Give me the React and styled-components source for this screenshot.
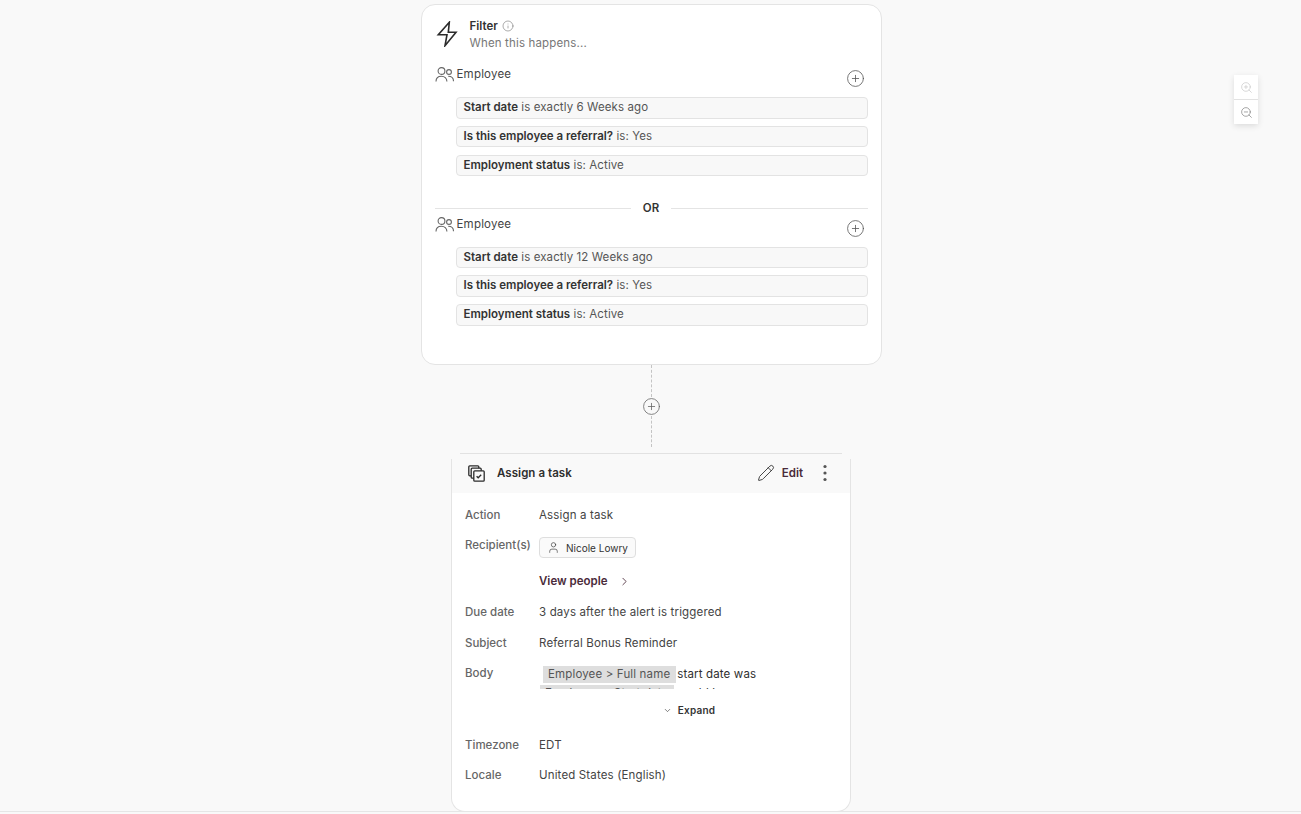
import React from 'react';
import styled, { createGlobalStyle } from 'styled-components';
import { Info, CirclePlus, Pencil, User, ChevronRight, ChevronDown, ZoomIn, ZoomOut } from 'lucide-react';

const GlobalStyle = createGlobalStyle`
  html, body {
    margin: 0;
    padding: 0;
    background: #f9f9f9;
    font-family: Inter, "Noto Sans", sans-serif;
    font-size: 12px;
    color: #2f2f2f;
  }
`;

const Page = styled.div`
  position: relative;
  height: 814px;
  overflow: hidden;
  background: #f9f9f9;
  box-sizing: border-box;
  padding-top: 4px;
  display: flex;
  flex-direction: column;
  align-items: center;
`;

const BottomRule = styled.div`
  position: absolute;
  left: 0;
  right: 0;
  top: 811px;
  height: 1px;
  background: #e6e6e6;
`;

const Column = styled.div`
  width: 461px;
  margin-left: 1px;
  display: flex;
  flex-direction: column;
  align-items: center;
`;

const FilterCard = styled.section`
  width: 461px;
  height: 361px;
  box-sizing: border-box;
  background: #fff;
  border: 1px solid #e4e4e4;
  border-radius: 14px;
  padding: 13px 13px 0 13px;
`;

const FilterHead = styled.header`
  display: flex;
  align-items: flex-start;
  height: 49px;
`;

const BoltBox = styled.div`
  width: 34px;
  margin-left: 1px;
  padding-top: 3px;
  color: #2b2b2b;
`;

const TitleLine = styled.div`
  display: flex;
  align-items: center;
  gap: 4px;
  height: 15px;
  font-weight: 600;
  font-size: 11.5px;
  color: #333;
  svg { color: #666; }
`;

const Subtitle = styled.div`
  margin-top: 2px;
  font-size: 11.5px;
  color: #777;
  letter-spacing: 0.15px;
  line-height: 16px;
`;

const GroupHead = styled.div`
  display: flex;
  align-items: flex-start;
  height: 30px;
  color: #444;
  letter-spacing: 0.2px;
  font-size: 11.5px;
`;

const GroupIcon = styled.div`
  width: 22px;
  height: 18px;
  margin-top: -1px;
  color: #666;
`;

const GroupName = styled.span`
  line-height: 14px;
`;

const PlusBox = styled.div`
  margin-left: auto;
  margin-right: 3px;
  margin-top: 2px;
  color: #555;
  height: 19px;
`;

const Conditions = styled.div`
  margin-left: 21px;
  display: flex;
  flex-direction: column;
  gap: 7.2px;
`;

const Condition = styled.div`
  height: 21.6px;
  box-sizing: border-box;
  border: 1px solid #e3e3e3;
  border-radius: 4px;
  background: #f8f8f8;
  padding: 0 7px;
  line-height: 18.5px;
  font-size: 11.5px;
  letter-spacing: 0.1px;
  color: #555;
  b {
    font-weight: 600;
    letter-spacing: 0;
    color: #333;
  }
`;

const OrDivider = styled.div`
  display: flex;
  align-items: center;
  gap: 12px;
  height: 14px;
  margin: 25px 0 1.5px 0;
  font-weight: 600;
  font-size: 11.5px;
  color: #333;
  &::before, &::after {
    content: '';
    flex: 1;
    height: 1px;
    background: #e4e4e4;
  }
`;

const Connector = styled.div`
  display: flex;
  flex-direction: column;
  align-items: center;
  height: 88px;
  color: #666;
`;

const Dash = styled.div`
  width: 0;
  height: ${p => p.$h}px;
  border-left: 1px dashed #c4c4c4;
`;

const ConnectorPlus = styled.div`
  height: 19px;
  margin-left: 1px;
`;

const TaskTopLine = styled.div`
  width: 382px;
  height: 1px;
  background: #e2e2e2;
`;

const TaskCard = styled.section`
  width: 400px;
  height: 353px;
  margin-top: 5px;
  box-sizing: border-box;
  background: #fff;
  border: 1px solid #e4e4e4;
  border-top: none;
  border-radius: 0 0 14px 14px;
`;

const TaskHead = styled.header`
  height: 34px;
  box-sizing: border-box;
  background: #f9f9f9;
  display: flex;
  align-items: center;
  padding: 0 16px 6px 16px;
`;

const TaskTitle = styled.h3`
  margin: 0 0 0 12px;
  font-size: 11.5px;
  font-weight: 600;
  color: #2f2f2f;
  letter-spacing: 0.05px;
`;

const EditButton = styled.button`
  margin-left: auto;
  display: flex;
  align-items: center;
  gap: 7px;
  background: none;
  border: none;
  padding: 0;
  font: inherit;
  font-size: 11.5px;
  font-weight: 600;
  color: #4a2b3a;
`;

const More = styled.svg`
  margin-left: 20px;
  margin-right: 7px;
  fill: #555;
`;

const TaskBody = styled.div`
  padding: 14px 13px 0 13px;
`;

const Field = styled.div`
  display: grid;
  grid-template-columns: 74px 1fr;
  height: ${p => p.$h}px;
  line-height: 16px;
  font-size: 11.5px;
  letter-spacing: 0.15px;
`;

const Label = styled.div`
  font-weight: 500;
  letter-spacing: 0;
  color: #666;
`;

const Value = styled.div`
  color: #444;
`;

const Chip = styled.div`
  display: inline-flex;
  align-items: center;
  gap: 6px;
  height: 21px;
  box-sizing: border-box;
  padding: 0 7px;
  border: 1px solid #dedede;
  border-radius: 4px;
  background: #fafafa;
  font-size: 10px;
  letter-spacing: 0;
  color: #333;
`;

const ViewPeople = styled.div`
  display: flex;
  align-items: center;
  gap: 10px;
  height: 16px;
  font-weight: 600;
  letter-spacing: 0;
  color: #4a2b3a;
`;

const BodyClip = styled.div`
  height: 24px;
  overflow: hidden;
  margin-left: 1px;
  padding-top: 1px;
  box-sizing: border-box;
  line-height: 17px;
`;

const BodyLine = styled.div`
  display: flex;
  height: 19px;
`;

const Token = styled.span`
  display: inline-block;
  background: #dedede;
  padding: 0 6px 0 5px;
  margin: 0 1px 0 ${p => p.$indent}px;
  height: 17px;
  color: #555;
`;

const ExpandRow = styled.div`
  display: flex;
  justify-content: center;
  align-items: center;
  gap: 6px;
  margin: 12px 0 18px 76px;
  height: 18px;
  font-size: 10px;
  font-weight: 600;
  letter-spacing: 0.2px;
  color: #333;
`;

const ZoomControls = styled.div`
  position: absolute;
  top: 75px;
  left: 1234px;
  width: 24px;
  background: #fff;
  box-shadow: 0 2px 6px rgba(0, 0, 0, 0.12);
`;

const ZoomButton = styled.div`
  height: 24px;
  display: flex;
  align-items: center;
  justify-content: center;
  color: ${p => (p.$disabled ? '#c4c4c4' : '#777')};
  & + & { border-top: 1px solid #e2e2e2; }
`;

const Bolt = () => (
  <svg width="24" height="26" viewBox="0 0 24 26" fill="none" stroke="currentColor" strokeWidth="1.6" strokeLinejoin="miter">
    <path d="M13.3 1.3 2.3 13.7H11L9 24.7l11-13.4h-7.7z" />
  </svg>
);

const PeopleIcon = () => (
  <svg width="20" height="17" viewBox="0 0 20 17" fill="none" stroke="currentColor" strokeWidth="1.1">
    <circle cx="6.5" cy="5" r="3.4" />
    <circle cx="14" cy="6" r="2.4" />
    <path d="M1 15.5c0-3.4 2.4-5.3 5.5-5.3 3 0 5.4 1.9 5.4 5.3" />
    <path d="M13.2 10.3c3 0 5.3 1.8 5.3 5" />
  </svg>
);

const TaskIcon = () => (
  <svg width="17" height="17" viewBox="0 0 17 17" fill="none" stroke="#2b2b2b" strokeWidth="1.3">
    <rect x="0.8" y="0.8" width="10" height="10" rx="1" />
    <rect x="3.2" y="3.2" width="10" height="10" rx="1" fill="#f9f9f9" />
    <rect x="5.8" y="5.8" width="10.4" height="10.4" rx="1" fill="#f9f9f9" />
    <path d="M8.6 11.2l1.6 1.6 3-3" />
  </svg>
);

function Group({ weeks }) {
  return (
    <>
      <GroupHead>
        <GroupIcon><PeopleIcon /></GroupIcon>
        <GroupName>Employee</GroupName>
        <PlusBox><CirclePlus size={19} strokeWidth={1} /></PlusBox>
      </GroupHead>
      <Conditions>
        <Condition><b>Start date</b> is exactly {weeks} ago</Condition>
        <Condition><b>Is this employee a referral?</b> is: Yes</Condition>
        <Condition><b>Employment status</b> is: Active</Condition>
      </Conditions>
    </>
  );
}

export default function App() {
  return (
    <Page>
      <GlobalStyle />
      <Column>
        <FilterCard>
          <FilterHead>
            <BoltBox><Bolt /></BoltBox>
            <div>
              <TitleLine>Filter <Info size={12} strokeWidth={1.1} /></TitleLine>
              <Subtitle>When this happens...</Subtitle>
            </div>
          </FilterHead>
          <Group weeks="6 Weeks" />
          <OrDivider>OR</OrDivider>
          <Group weeks="12 Weeks" />
        </FilterCard>
        <Connector>
          <Dash $h={32} />
          <ConnectorPlus><CirclePlus size={19} strokeWidth={1} /></ConnectorPlus>
          <Dash $h={31} />
        </Connector>
        <TaskTopLine />
        <TaskCard>
          <TaskHead>
            <TaskIcon />
            <TaskTitle>Assign a task</TaskTitle>
            <EditButton>
              <Pencil size={18} strokeWidth={1.2} color="#333" />
              Edit
            </EditButton>
            <More width="4" height="18" viewBox="0 0 4 18">
              <circle cx="2" cy="2.5" r="1.6" />
              <circle cx="2" cy="9" r="1.6" />
              <circle cx="2" cy="15.5" r="1.6" />
            </More>
          </TaskHead>
          <TaskBody>
            <Field $h={30}><Label>Action</Label><Value>Assign a task</Value></Field>
            <Field $h={36}>
              <Label>Recipient(s)</Label>
              <Value>
                <Chip><User size={13} strokeWidth={1.2} /> Nicole Lowry</Chip>
              </Value>
            </Field>
            <Field $h={31}>
              <div />
              <ViewPeople>View people <ChevronRight size={13} strokeWidth={1.6} /></ViewPeople>
            </Field>
            <Field $h={31}><Label>Due date</Label><Value>3 days after the alert is triggered</Value></Field>
            <Field $h={30}><Label>Subject</Label><Value>Referral Bonus Reminder</Value></Field>
            <Field $h={24}>
              <Label>Body</Label>
              <BodyClip>
                <BodyLine><Token $indent={3}>Employee &gt; Full name</Token>start date was</BodyLine>
                <BodyLine><Token $indent={0}>Employee &gt; Start date</Token>would be on</BodyLine>
              </BodyClip>
            </Field>
            <ExpandRow><ChevronDown size={9} strokeWidth={1.6} /> Expand</ExpandRow>
            <Field $h={30}><Label>Timezone</Label><Value>EDT</Value></Field>
            <Field $h={30}><Label>Locale</Label><Value>United States (English)</Value></Field>
          </TaskBody>
        </TaskCard>
      </Column>
      <BottomRule />
      <ZoomControls>
        <ZoomButton $disabled><ZoomIn size={13} strokeWidth={1.2} /></ZoomButton>
        <ZoomButton><ZoomOut size={13} strokeWidth={1.2} /></ZoomButton>
      </ZoomControls>
    </Page>
  );
}
